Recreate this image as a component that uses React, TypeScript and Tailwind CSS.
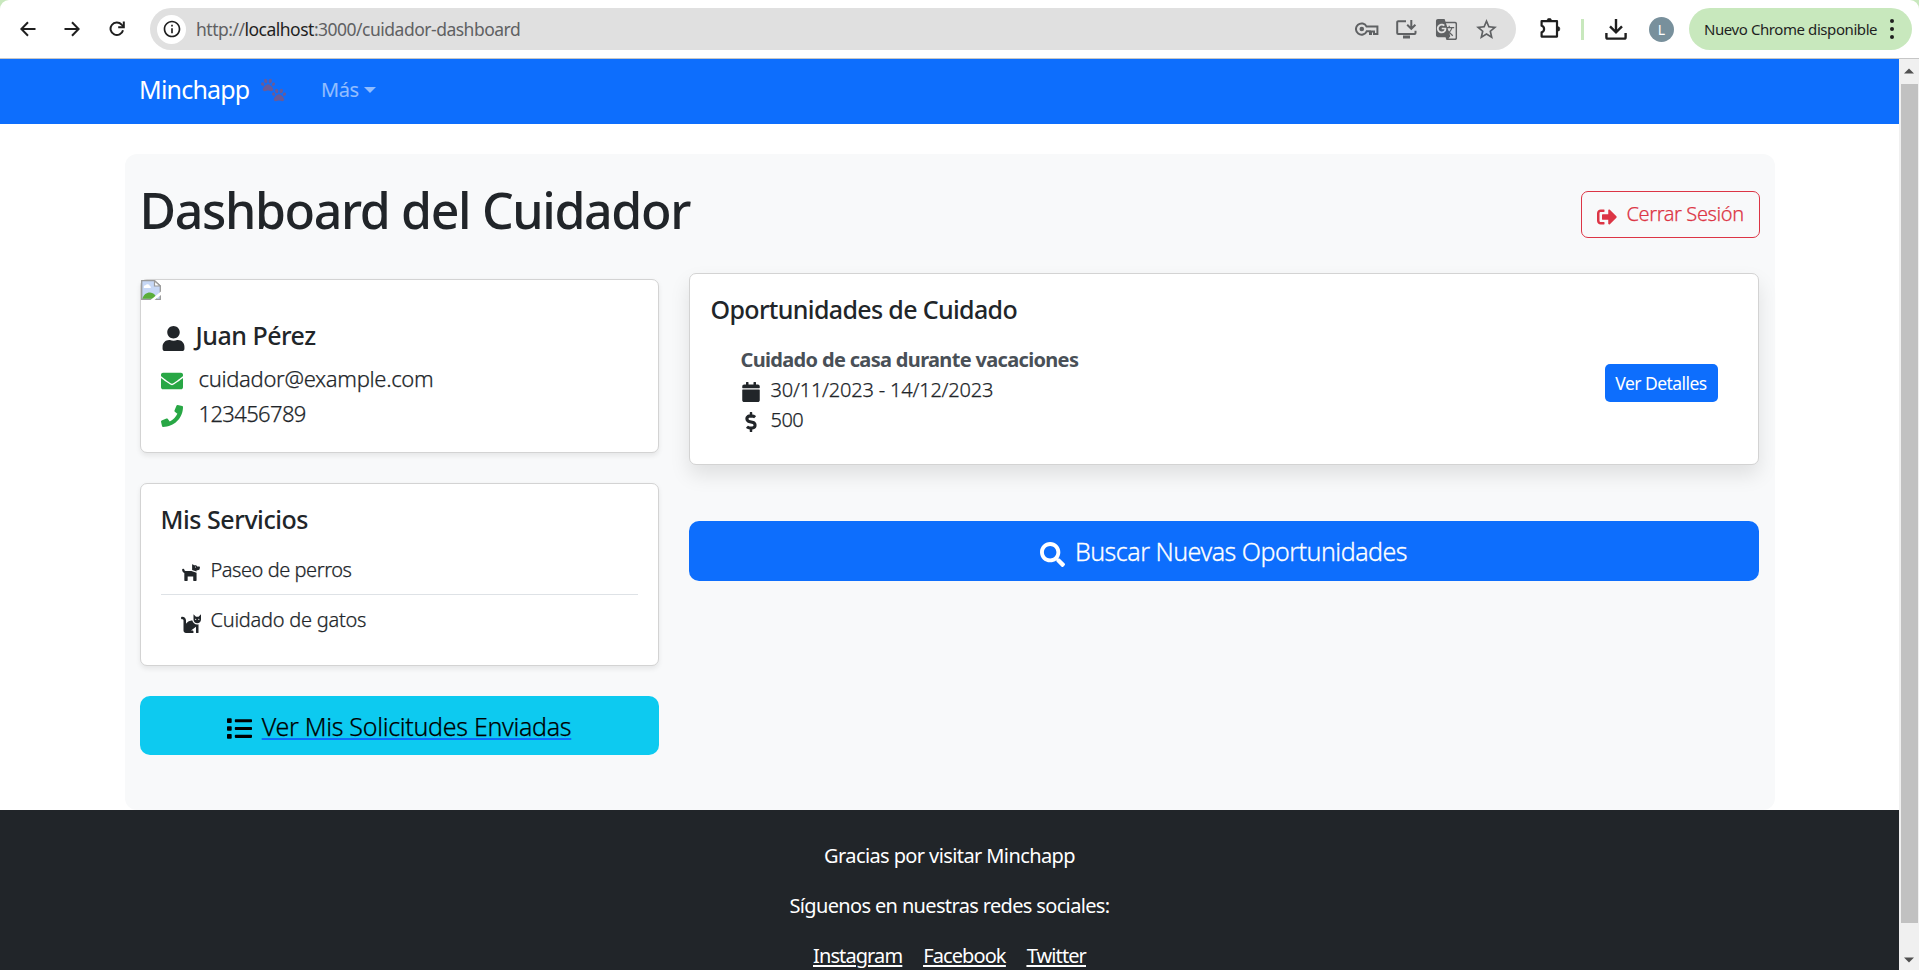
import React from "react";
import {
  FaUser, FaEnvelope, FaPhone, FaDog, FaCat, FaList, FaCalendar,
  FaDollarSign, FaSearch, FaSignOutAlt, FaPaw,
} from "react-icons/fa";
import { MdInfoOutline, MdGTranslate, MdStarBorder } from "react-icons/md";

function BackArrow({ className }: { className?: string }) {
  return (
    <svg className={className} width="16" height="16" viewBox="0 0 16 16" fill="none" stroke="#1f1f1f" strokeWidth="2">
      <path d="M15.5 8H2M8 1.2 1.4 8 8 14.8" />
    </svg>
  );
}

function ReloadIcon() {
  return (
    <svg width="16" height="16" viewBox="0 0 16 16" fill="none" stroke="#1f1f1f" strokeWidth="2">
      <path d="M14 9.2A6.3 6.3 0 1 1 12.6 3.6L14.6 5.6" />
      <path d="M14.8 0.5V6.2H9.2" />
    </svg>
  );
}

function InstallIcon() {
  return (
    <svg width="21" height="19" viewBox="0 0 21 19" fill="none" stroke="#5f6163" strokeWidth="2">
      <path d="M10 1.2H2.2a1 1 0 0 0-1 1V13a1 1 0 0 0 1 1H18.5a1 1 0 0 0 1-1v-2.3" />
      <path d="M7 17h7" strokeWidth="3" />
      <path d="M15.3 0v8M11.2 4.8l4.1 4 4.1-4" />
    </svg>
  );
}

function KeyIcon() {
  return (
    <svg width="24" height="14" viewBox="0 0 24 14" fill="none" stroke="#5f6163" strokeWidth="2">
      <path d="M11.6 4.6H22.4V12H19V9.6H16V12H15V9.3H11.7A5.6 5.6 0 1 1 11.6 4.6Z" />
      <circle cx="6.8" cy="7" r="2.3" fill="#5f6163" stroke="none" />
    </svg>
  );
}

function PuzzleIcon() {
  return (
    <svg width="21" height="21" viewBox="0 0 21 21" fill="none" stroke="#1f1f1f" strokeWidth="2.2" strokeLinejoin="round">
      <path d="M1.6 3.2H17v15.4H1.6v-4.4a3.3 3.3 0 0 0 0-6.4Z" />
      <path d="M7 2.6a2.3 2.3 0 0 1 4.6 0ZM17.6 8.6a2.3 2.3 0 0 1 0 4.6Z" fill="#1f1f1f" strokeWidth="0.5" />
    </svg>
  );
}

function DownloadIcon() {
  return (
    <svg width="22" height="21" viewBox="0 0 22 21" fill="none" stroke="#1f1f1f" strokeWidth="2.4">
      <path d="M11 0v13M5 7.3l6 6 6-6M1.4 14v4.2a1.4 1.4 0 0 0 1.4 1.4h16.4a1.4 1.4 0 0 0 1.4-1.4V14" />
    </svg>
  );
}

function BrokenImage() {
  return (
    <svg width="20" height="20" viewBox="0 0 20 20">
      <path d="M.7.7H13.5L19.3 6V19.3H.7Z" fill="#c6d7f5" stroke="#9a9a9a" strokeWidth="1.3" />
      <path d="M13.5.7V6h5.8Z" fill="#fff" stroke="#9a9a9a" strokeWidth="1.2" />
      <path d="M3 8a2 2 0 0 1 1.500-2.700 2.500 2.500 0 0 1 4.400.600 1.500 1.500 0 0 1 .800 2.100Z" fill="#fff" />
      <path d="M1.400 18.700c1.200-4 3.800-6.200 7.600-6.200 3 0 5.500 2 7 6.200Z" fill="#5aae3a" />
      <path d="M20 11.500 9.500 20H13.500L20 15Z" fill="#fff" />
    </svg>
  );
}

function BrowserBar() {
  return (
    <div className="h-[59px] shrink-0 bg-[#c8e8bd]">
      <div className="flex h-full items-center rounded-t-[9px] border-b border-[#c6c6c6] bg-white pr-[7px] pl-5">
        <BackArrow />
        <BackArrow className="ml-[28px] rotate-180" />
        <div className="ml-[29px]"><ReloadIcon /></div>
        <div className="ml-[25px] flex h-[42px] w-[1366px] items-center rounded-full bg-[#e0e0e0] pr-[17px] pl-[7px]">
          <div className="flex size-[29px] items-center justify-center rounded-full bg-white">
            <MdInfoOutline className="size-5 text-[#1f1f1f]" />
          </div>
          <div className="ml-[10px] flex-1 pt-[1px] text-[17.5px] tracking-[-0.5px] text-[#5f6163]">
            http://<span className="text-[#1f1f1f]">localhost</span>:3000/cuidador-dashboard
          </div>
          <div className="flex items-center">
            <KeyIcon />
            <div className="ml-[17px]"><InstallIcon /></div>
            <MdGTranslate className="ml-[18px] size-[23px] text-[#5f6163]" />
            <MdStarBorder className="ml-[16px] size-[25px] text-[#5f6163]" />
          </div>
        </div>
        <div className="ml-[24px] pb-[2px]"><PuzzleIcon /></div>
        <div className="ml-[20px] h-[21px] w-[3px] bg-[#c8e8bd]" />
        <div className="ml-[21px]"><DownloadIcon /></div>
        <div className="ml-[22px] flex size-[25px] items-center justify-center rounded-full bg-[#78909c] text-[14px] text-white">L</div>
        <div className="ml-auto flex h-[42px] w-[223px] items-center rounded-full bg-[#c8e8bd] pl-[15px] text-[15px] text-[#1f1f1f]">
          <span className="w-[177px] tracking-[-0.42px] whitespace-nowrap">Nuevo Chrome disponible</span>
          <div className="ml-[9px] flex flex-col gap-[4px]">
            <i className="size-1 rounded-full bg-[#1f1f1f]" />
            <i className="size-1 rounded-full bg-[#1f1f1f]" />
            <i className="size-1 rounded-full bg-[#1f1f1f]" />
          </div>
        </div>
      </div>
    </div>
  );
}

function Scrollbar() {
  return (
    <div className="flex w-5 shrink-0 flex-col items-center bg-[#f0f0f0] pt-[9px] pb-[7px]">
      <svg width="10" height="6" viewBox="0 0 10 6"><path d="M0 5.500 5 .5l5 5Z" fill="#505050" /></svg>
      <div className="mt-[10px] h-[839px] w-[17px] bg-[#c1c1c1]" />
      <svg className="mt-auto" width="10" height="6" viewBox="0 0 10 6"><path d="M0 .5 5 5.500l5-5Z" fill="#505050" /></svg>
    </div>
  );
}

function Navbar() {
  return (
    <nav className="flex h-[65px] items-center bg-[#0d6efd] pb-[3px] pl-[139px]">
      <span className="w-[112px] text-[25px] tracking-[-0.8px] text-white">Minchapp</span>
      <span className="ml-[10px] flex h-[23px] w-[27px] text-[#6a5b97]">
        <FaPaw className="size-[14px] shrink-0" />
        <FaPaw className="-ml-[3px] mt-[10px] size-[14px] shrink-0" />
      </span>
      <span className="ml-[33px] text-[20px] tracking-[-0.4px] text-white/55">Más</span>
      <svg className="ml-[5px]" width="12" height="6" viewBox="0 0 12 6"><path d="M0 0h12L6 6Z" fill="#fff" fillOpacity=".55" /></svg>
    </nav>
  );
}

function Profile() {
  return (
    <section className="h-[174px] rounded-[7px] border border-[#d3d3d3] bg-white shadow-[0_2.5px_5px_rgba(0,0,0,0.075)]">
      <BrokenImage />
      <div className="mt-[21px] flex h-[30px] items-center pl-[20px] text-[25px]">
        <FaUser className="mt-[6px] size-[25px]" />
        <span className="ml-[10px] font-medium tracking-[-0.5px]">Juan Pérez</span>
      </div>
      <div className="mt-[10px] pl-[20px] text-[22px] leading-[35px] font-light [-webkit-text-stroke:0.25px]">
        <div className="flex items-center">
          <FaEnvelope className="mt-[6px] size-[22px] text-[#28a745]" />
          <span className="ml-[16px] tracking-[-0.32px]">cuidador@example.com</span>
        </div>
        <div className="flex items-center">
          <FaPhone className="mt-[6px] size-[22px] text-[#28a745]" />
          <span className="ml-[16px] tracking-[-0.65px]">123456789</span>
        </div>
      </div>
    </section>
  );
}

function Services() {
  return (
    <section className="mt-[30px] h-[183px] rounded-[7px] border border-[#d3d3d3] bg-white px-[20px] pt-[20px] shadow-[0_2.5px_5px_rgba(0,0,0,0.075)]">
      <h2 className="h-[30px] text-[25px] leading-[30px] font-medium tracking-[-0.45px]">Mis Servicios</h2>
      <ul className="mt-[11px] text-[20px] font-light [-webkit-text-stroke:0.25px]">
        <li className="flex h-[50px] items-center border-b border-[#dee2e6] pl-[20px]">
          <FaDog className="mt-[6px] size-[20px] [-webkit-text-stroke:0]" />
          <span className="ml-[10px] pt-[1px] tracking-[-0.45px]">Paseo de perros</span>
        </li>
        <li className="flex h-[50px] items-center pl-[20px]">
          <FaCat className="mt-[6px] size-[20px]" />
          <span className="ml-[10px] pt-[1px] tracking-[-0.25px]">Cuidado de gatos</span>
        </li>
      </ul>
    </section>
  );
}

function Opportunities() {
  return (
    <section className="h-[192px] rounded-[7px] border border-[#d3d3d3] bg-white pt-[20px] pr-[40px] pl-[21px] shadow-[0_10px_20px_rgba(0,0,0,0.1)]">
      <h2 className="h-[30px] text-[25px] leading-[30px] font-medium tracking-[-0.65px]">Oportunidades de Cuidado</h2>
      <div className="mt-[21px] flex items-center justify-between pl-[30px]">
        <div className="text-[20px] leading-[30px] font-light">
          <h3 className="font-bold tracking-[-0.67px] text-[#495057]">Cuidado de casa durante vacaciones</h3>
          <div className="flex items-center [-webkit-text-stroke:0.25px]">
            <FaCalendar className="mt-[4px] size-[20px]" />
            <span className="ml-[10px] tracking-[-0.2px]">30/11/2023 - 14/12/2023</span>
          </div>
          <div className="flex items-center [-webkit-text-stroke:0.25px]">
            <FaDollarSign className="mt-[4px] size-[20px]" />
            <span className="ml-[10px] tracking-[-0.5px]">500</span>
          </div>
        </div>
        <button className="mb-[14px] h-[38px] w-[113px] rounded-[5px] bg-[#0d6efd] pt-[1px] text-[17.5px] tracking-[-0.55px] whitespace-nowrap text-white">
          Ver Detalles
        </button>
      </div>
    </section>
  );
}

function Footer() {
  return (
    <footer className="h-[160px] bg-[#212529] pt-[31px] text-center text-[20px] leading-[30px] text-white">
      <p className="tracking-[-0.6px]">Gracias por visitar Minchapp</p>
      <p className="mt-5 tracking-[-0.65px]">Síguenos en nuestras redes sociales:</p>
      <div className="mt-5 flex justify-center gap-[21px] tracking-[-0.9px] underline decoration-2 underline-offset-2">
        <a>Instagram</a>
        <a>Facebook</a>
        <a>Twitter</a>
      </div>
    </footer>
  );
}

export default function App() {
  return (
    <div className="flex h-[970px] w-[1919px] flex-col overflow-hidden bg-white font-['Noto_Sans','Open_Sans',sans-serif] text-[#212529]">
      <BrowserBar />
      <div className="flex h-[911px]">
        <div className="flex w-[1899px] flex-col">
          <Navbar />
          <main className="mx-auto mt-[30px] h-[657px] w-[1650px] rounded-[12px] bg-[#f8f9fa] px-[15px]">
            <header className="flex h-[119px] items-start justify-between pt-[26px]">
              <h1 className="text-[50px] leading-[60px] font-medium tracking-[-1.35px]">Dashboard del Cuidador</h1>
              <button className="mt-[11px] flex h-[47px] w-[179px] items-center rounded-[7px] border border-[#dc3545] pl-[15px] text-[20px] font-light text-[#dc3545]">
                <FaSignOutAlt className="mt-[5px] size-[20px]" />
                <span className="ml-[10px] tracking-[-0.4px] whitespace-nowrap [-webkit-text-stroke:0.25px]">Cerrar Sesión</span>
              </button>
            </header>
            <div className="flex gap-[30px]">
              <div className="w-[519px] pt-[6px]">
                <Profile />
                <Services />
                <button className="mt-[30px] flex h-[59px] w-full items-center justify-center rounded-[10px] bg-[#0dcaf0] text-[25px] font-light text-black">
                  <FaList className="mt-[7px] size-[25px]" />
                  <span className="ml-[10px] pt-[2px] tracking-[-0.3px] underline decoration-[#0d6efd] decoration-2 underline-offset-[2px] [-webkit-text-stroke:0.25px]">Ver Mis Solicitudes Enviadas</span>
                </button>
              </div>
              <div className="w-[1070px]">
                <Opportunities />
                <button className="mt-[56px] flex h-[60px] w-full items-center justify-center rounded-[10px] bg-[#0d6efd] text-[25px] font-light text-white">
                  <FaSearch className="mt-[7px] size-[25px]" />
                  <span className="ml-[10px] pt-[2px] tracking-[-0.5px] [-webkit-text-stroke:0.3px]">Buscar Nuevas Oportunidades</span>
                </button>
              </div>
            </div>
          </main>
          <Footer />
        </div>
        <Scrollbar />
      </div>
    </div>
  );
}
